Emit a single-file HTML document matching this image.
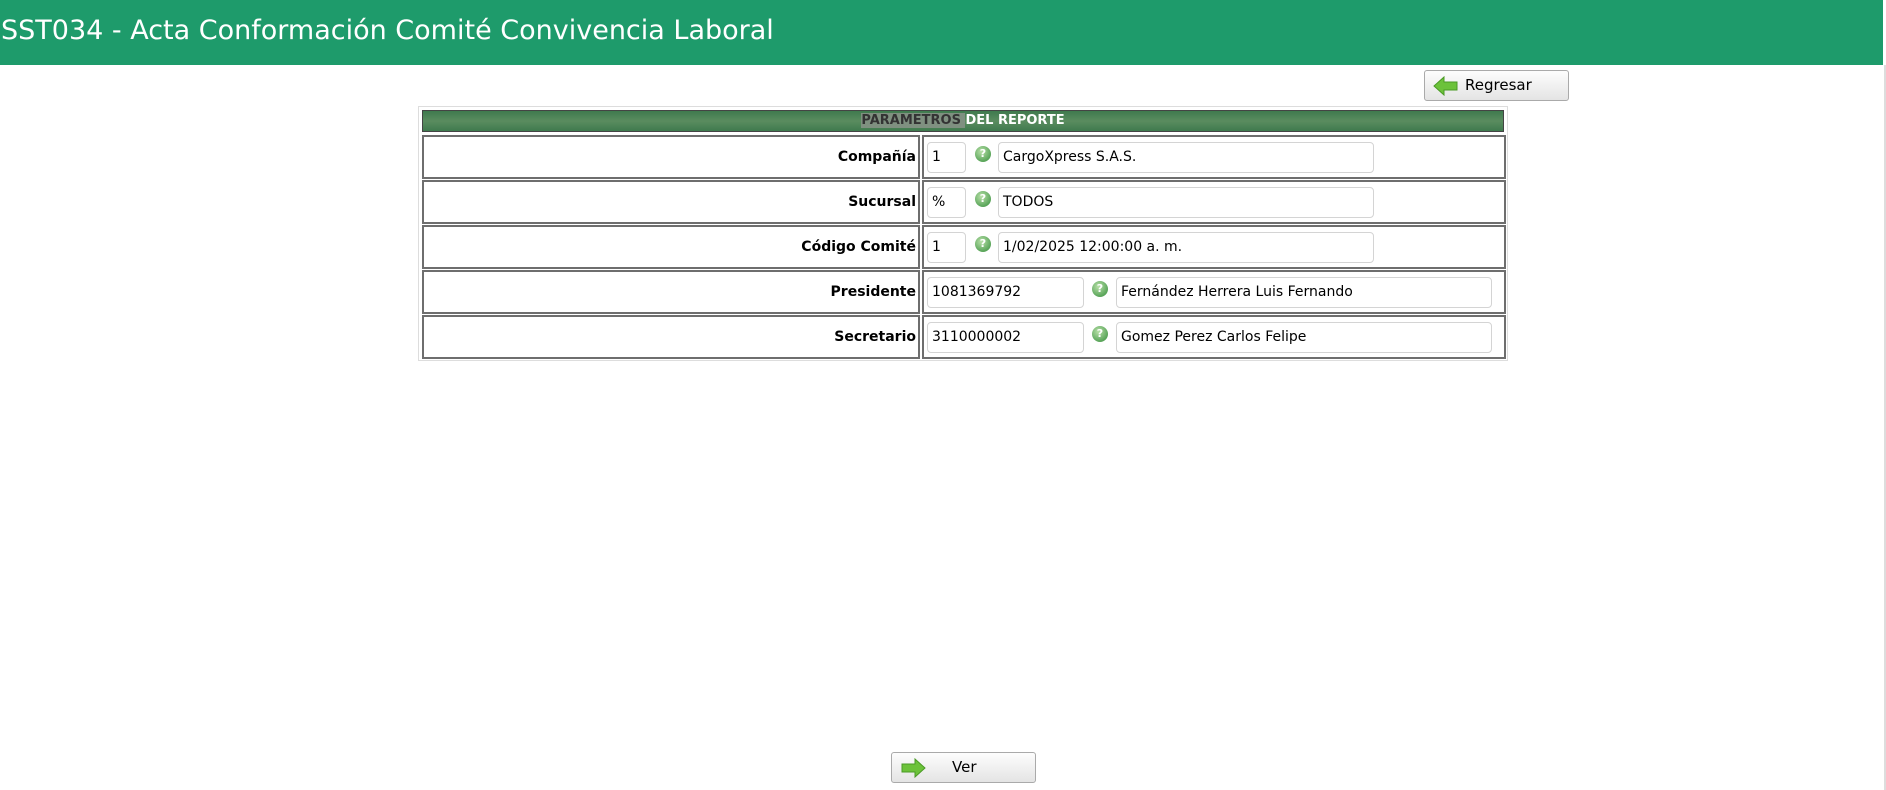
<!DOCTYPE html>
<html><head><meta charset="utf-8"><style>
body{margin:0;width:1886px;height:790px;background:#fff;position:relative;overflow:hidden;font-family:"DejaVu Sans","Liberation Sans",sans-serif;}
.hdr{position:absolute;left:0;top:0;width:1883px;height:65px;background:#1e9b6b;color:#fff;font-size:27px;line-height:62px;padding-left:1px;box-sizing:border-box;}
.rb{position:absolute;right:0;top:65px;width:2px;height:725px;background:#ddd}
.outer{position:absolute;left:418px;top:106px;width:1090px;height:255px;border:1px solid #ddd;box-sizing:border-box}
.th{position:absolute;left:422px;top:110px;width:1082px;height:22px;background:linear-gradient(#3f7a4e,#5a8c5f 50%,#3f7a4e);border:1px solid #444;box-sizing:border-box;text-align:center;font-size:13px;font-weight:bold;color:#fff;line-height:20px}
.th span{background:#7f9080;color:#333}
.cell{position:absolute;border:2px solid #6e6e6e;box-sizing:border-box;height:44px}
.lab{text-align:right;font-weight:bold;font-size:14px;line-height:40px;padding-right:2px;color:#000}
.in{position:absolute;height:31px;border:1px solid #d4d4d4;border-radius:4px;box-sizing:border-box;font-size:14px;line-height:29px;padding-left:4px;background:#fff}
.q{position:absolute;width:16px;height:16px;border-radius:50%;background:radial-gradient(circle at 40% 35%,#b8e0a8,#5aa55a 70%);color:#fff;font-size:11px;font-weight:bold;text-align:center;line-height:16px}
.btn{position:absolute;height:31px;border:1px solid #aaa;border-radius:3px;background:linear-gradient(#fdfdfd,#e4e4e4);box-sizing:border-box;font-size:15px;line-height:29px}
</style></head><body>
<div class="hdr">SST034 - Acta Conformación Comité Convivencia Laboral</div>
<div class="rb"></div>
<div class="btn" style="left:1424px;top:70px;width:145px"><svg style="position:absolute;left:8px;top:5px" width="26" height="20" viewBox="0 0 26 20"><path d="M1 10 L11 1 L11 6 L24 6 L24 14 L11 14 L11 19 Z" fill="#6cc23a" stroke="#4a9a25" stroke-width="1"/></svg><span style="position:absolute;left:40px">Regresar</span></div>
<div class="outer"></div>
<div class="th"><span>PARAMETROS </span>DEL REPORTE</div>

<div class="cell lab" style="left:422px;top:135px;width:498px">Compañía</div>
<div class="cell" style="left:922px;top:135px;width:584px"></div>
<div class="in" style="left:927px;top:142px;width:39px">1</div><div class="q" style="left:975px;top:146px">?</div>
<div class="in" style="left:998px;top:142px;width:376px">CargoXpress S.A.S.</div>

<div class="cell lab" style="left:422px;top:180px;width:498px">Sucursal</div>
<div class="cell" style="left:922px;top:180px;width:584px"></div>
<div class="in" style="left:927px;top:187px;width:39px">%</div><div class="q" style="left:975px;top:191px">?</div>
<div class="in" style="left:998px;top:187px;width:376px">TODOS</div>

<div class="cell lab" style="left:422px;top:225px;width:498px">Código Comité</div>
<div class="cell" style="left:922px;top:225px;width:584px"></div>
<div class="in" style="left:927px;top:232px;width:39px">1</div><div class="q" style="left:975px;top:236px">?</div>
<div class="in" style="left:998px;top:232px;width:376px">1/02/2025 12:00:00 a. m.</div>

<div class="cell lab" style="left:422px;top:270px;width:498px">Presidente</div>
<div class="cell" style="left:922px;top:270px;width:584px"></div>
<div class="in" style="left:927px;top:277px;width:157px">1081369792</div><div class="q" style="left:1092px;top:281px">?</div>
<div class="in" style="left:1116px;top:277px;width:376px">Fernández Herrera Luis Fernando</div>

<div class="cell lab" style="left:422px;top:315px;width:498px">Secretario</div>
<div class="cell" style="left:922px;top:315px;width:584px"></div>
<div class="in" style="left:927px;top:322px;width:157px">3110000002</div><div class="q" style="left:1092px;top:326px">?</div>
<div class="in" style="left:1116px;top:322px;width:376px">Gomez Perez Carlos Felipe</div>

<div class="btn" style="left:891px;top:752px;width:145px"><svg style="position:absolute;left:8px;top:5px" width="26" height="20" viewBox="0 0 26 20"><path d="M25 10 L15 1 L15 6 L2 6 L2 14 L15 14 L15 19 Z" fill="#6cc23a" stroke="#4a9a25" stroke-width="1"/></svg><span style="position:absolute;left:60px">Ver</span></div>
</body></html>
